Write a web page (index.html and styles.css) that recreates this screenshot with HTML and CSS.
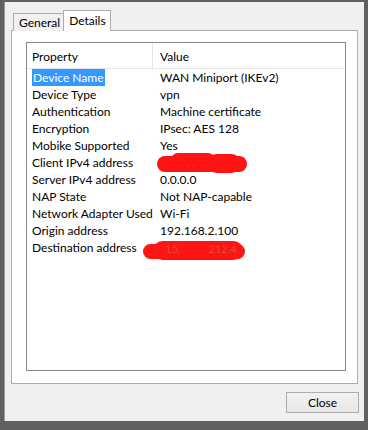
FILE: index.html
```html
<!DOCTYPE html>
<html lang="en">
<head>
  <meta charset="UTF-8" />
  <title>WAN Miniport (IKEv2) Properties</title>
  <link rel="stylesheet" href="styles.css">
</head>
<body>
  <div class="dialog">
    <div class="tabs">
      <div class="tab">General</div>
      <div class="tab active">Details</div>
    </div>

    <div class="panel">
      <div class="listview">
        <div class="lv-header">
          <div class="col-prop">Property</div>
          <div class="col-val">Value</div>
        </div>
        <div class="lv-row"><div class="col-prop"><span class="selected">Device Name</span></div><div class="col-val">WAN Miniport (IKEv2)</div></div>
        <div class="lv-row"><div class="col-prop">Device Type</div><div class="col-val">vpn</div></div>
        <div class="lv-row"><div class="col-prop">Authentication</div><div class="col-val">Machine certificate</div></div>
        <div class="lv-row"><div class="col-prop">Encryption</div><div class="col-val">IPsec: AES 128</div></div>
        <div class="lv-row"><div class="col-prop">Mobike Supported</div><div class="col-val">Yes</div></div>
        <div class="lv-row"><div class="col-prop">Client IPv4 address</div><div class="col-val"></div></div>
        <div class="lv-row"><div class="col-prop">Server IPv4 address</div><div class="col-val">0.0.0.0</div></div>
        <div class="lv-row"><div class="col-prop">NAP State</div><div class="col-val">Not NAP-capable</div></div>
        <div class="lv-row"><div class="col-prop">Network Adapter Used</div><div class="col-val">Wi-Fi</div></div>
        <div class="lv-row"><div class="col-prop">Origin address</div><div class="col-val">192.168.2.100</div></div>
        <div class="lv-row"><div class="col-prop">Destination address</div><div class="col-val"></div></div>

        <!-- redacted values -->
        <div class="scribble scribble-client">
          <span class="blob b1"></span><span class="blob b2"></span><span class="blob b3"></span>
          <span class="ghost">. .</span>
        </div>
        <div class="scribble scribble-dest">
          <span class="blob b1"></span><span class="blob b2"></span><span class="blob b3"></span>
          <span class="ghost">15.&nbsp;&nbsp;&nbsp;&nbsp;&nbsp;&nbsp;&nbsp;&nbsp;&nbsp;&nbsp;212.4</span>
        </div>
      </div>
    </div>

    <div class="buttons">
      <button class="btn">Close</button>
    </div>
  </div>
</body>
</html>
```

FILE: styles.css
```css
* { box-sizing: border-box; }
body { margin: 0; background: #606060; font-family: 'Lato', 'Liberation Sans', sans-serif; font-size: 12px; color: #000; }

.dialog {
  margin: 2px 4px 0 4px; height: 419px; background: #f0f0f0;
  border-left: 1px solid #9a9a9a; padding: 8px 6px 0 6px;
}

.tabs { display: flex; align-items: flex-end; margin-left: 2px; margin-bottom: -1px; height: 21px; position: relative; z-index: 1; }
.tab {
  height: 18px; padding: 0 3px 0 5px; line-height: 18px; white-space: nowrap;
  border: 1px solid #adadad; border-bottom: none; background: #f0f0f0;
}
.tab.active {
  height: 21px; margin-left: -1px; background: #fff; line-height: 19px; padding: 0 4px 0 5px;
}

.panel {
  background: #fff; border: 1px solid #adadad; height: 354px;
  padding: 11px 11px 0 14px;
}

.listview { position: relative; border: 1px solid #828790; height: 329px; }
.lv-header { display: flex; height: 26px; border-bottom: 1px solid #e5e5e5; }
.lv-header .col-prop { border-right: 1px solid #e5e5e5; line-height: 27px; }
.lv-header .col-val { line-height: 27px; }
.lv-row { display: flex; height: 17px; line-height: 17px; }
.col-prop { width: 126px; padding-left: 5px; white-space: nowrap; }
.col-val { padding-left: 7px; white-space: nowrap; }
.selected { background: #3399ff; color: #fff; padding: 0 1px; display: inline-block; height: 17px; }

.scribble { position: absolute; height: 20px; filter: blur(0.4px); }
.scribble-client { left: 130px; top: 110px; width: 90px; }
.scribble-dest { left: 116px; top: 197px; width: 102px; }
.blob { position: absolute; background: #ff1414; border-radius: 10px; }
.scribble-client .b1 { left: 0; top: 3px; width: 90px; height: 16px; }
.scribble-client .b2 { left: 14px; top: 0; width: 44px; height: 14px; }
.scribble-client .b3 { left: 50px; top: 1px; width: 34px; height: 19px; }
.scribble-dest .b1 { left: 0; top: 4px; width: 102px; height: 15px; }
.scribble-dest .b2 { left: 10px; top: 1px; width: 90px; height: 19px; }
.scribble-dest .b3 { left: 2px; top: 6px; width: 20px; height: 12px; }
.ghost { position: absolute; left: 22px; top: 2px; color: #e04a3a; font-size: 11px; white-space: nowrap; }
.scribble-client .ghost { left: 30px; top: 3px; }

.buttons { display: flex; justify-content: flex-end; margin-top: 8px; margin-right: -1px; }
.btn {
  width: 73px; height: 21px; font-family: inherit; font-size: 12px; padding: 0;
  border: 1px solid #acacac; background: linear-gradient(#f2f2f2, #e6e6e6); color: #000;
}
```
